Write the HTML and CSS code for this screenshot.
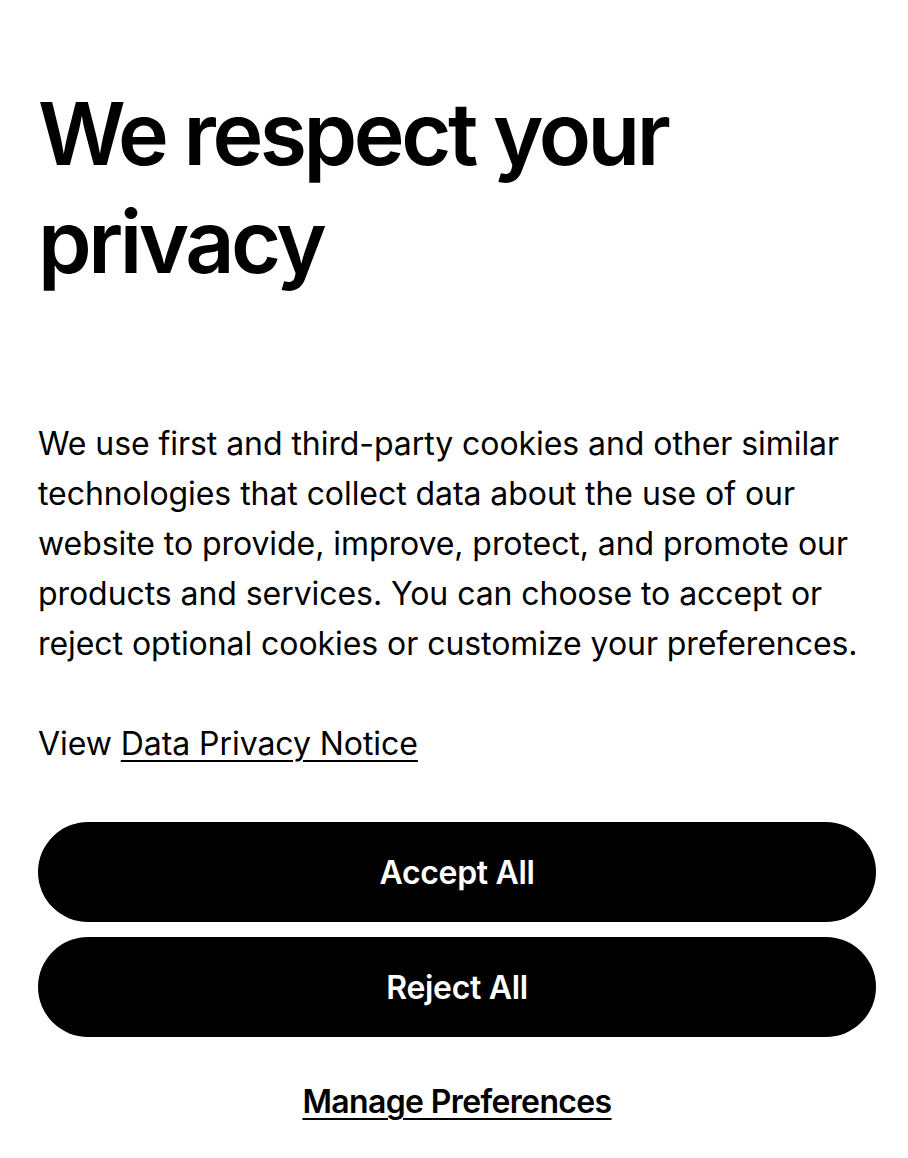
FILE: index.html
```html
<!DOCTYPE html>
<html lang="en">
<head>
<meta charset="utf-8">
<link rel="stylesheet" href="styles.css">
<title>Privacy</title>
</head>
<body>
<main class="banner">
  <h1 class="title">We respect your privacy</h1>
  <p class="text">We use first and third-party cookies and other similar technologies that collect data about the use of our website to provide, improve, protect, and promote our products and services. You can choose to accept or reject optional cookies or customize your preferences.</p>
  <p class="text view">View <a class="link" href="#">Data Privacy Notice</a></p>
  <div class="actions">
    <button class="btn">Accept All</button>
    <button class="btn">Reject All</button>
    <a class="manage" href="#">Manage Preferences</a>
  </div>
</main>
</body>
</html>
```
FILE: styles.css
```css
html, body {
  margin: 0;
  padding: 0;
  background: #fff;
}
body {
  font-family: Inter, "Noto Sans", sans-serif;
  color: #000;
}
.banner {
  padding: 80px 32px 0 38px;
}
.title {
  margin: 0;
  font-size: 86px;
  line-height: 108px;
  font-weight: 600;
  letter-spacing: -0.04em;
  width: 680px;
}
.text {
  margin: 123px 0 0 0;
  font-size: 32px;
  line-height: 50px;
  font-weight: 400;
  letter-spacing: -0.002em;
}
.view {
  margin-top: 50px;
}
.link {
  color: #000;
  text-decoration: underline;
  text-underline-offset: 5px;
  text-decoration-thickness: 2px;
}
.actions {
  margin-top: 53px;
  display: flex;
  flex-direction: column;
  gap: 15px;
  align-items: stretch;
}
.btn {
  height: 100px;
  border: none;
  border-radius: 50px;
  background: #000;
  color: #fff;
  font-family: Inter, "Noto Sans", sans-serif;
  font-size: 32px;
  font-weight: 600;
  letter-spacing: -0.01em;
}
.manage {
  align-self: center;
  margin-top: 30px;
  color: #000;
  font-size: 32px;
  font-weight: 600;
  letter-spacing: -0.02em;
  text-decoration: underline;
  text-underline-offset: 5px;
  text-decoration-thickness: 2px;
}
```
